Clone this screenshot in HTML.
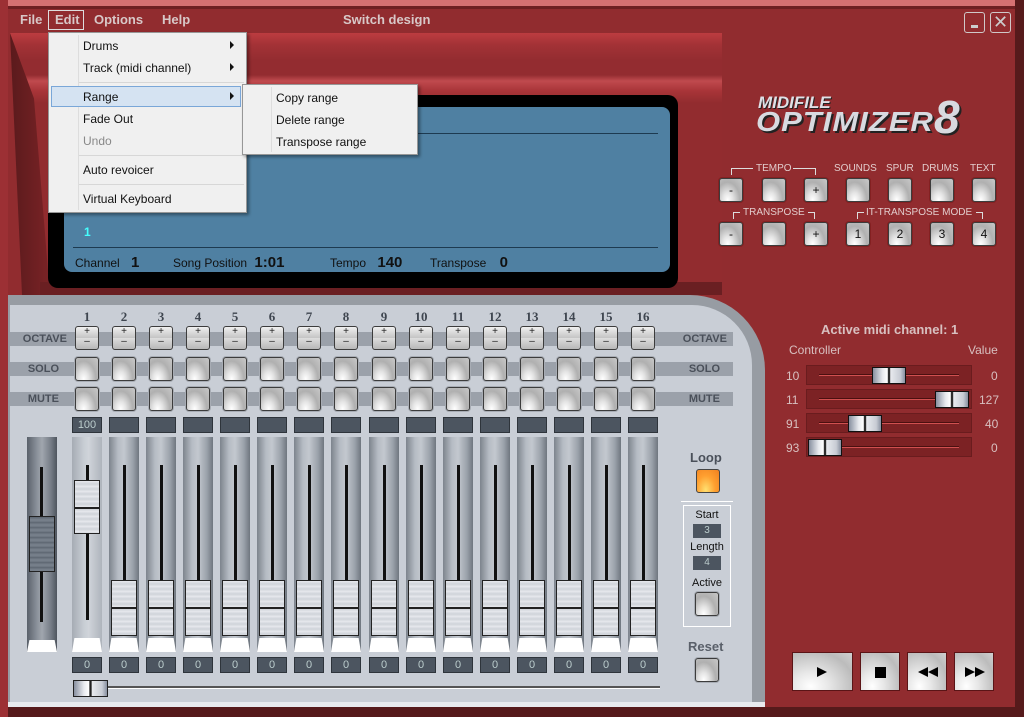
<!DOCTYPE html>
<html><head><meta charset="utf-8"><style>
*{margin:0;padding:0;box-sizing:border-box}
body{width:1024px;height:717px;overflow:hidden;background:#912c2f;position:relative;font-family:"Liberation Sans",sans-serif}
.a{position:absolute}
.menu{color:#d8c8c8;font-weight:bold;font-size:13px;top:12px}
.btn{position:absolute;width:24px;height:24px;border:1px solid #3c3c3c;border-radius:3px;background:radial-gradient(ellipse at 35% 95%,#fff 0,#e4e4e4 25%,#b0b0b0 60%,#c8c8c8 100%);box-shadow:0 0 0 1px rgba(120,20,20,.5);font-size:12px;text-align:center;line-height:22px;color:#111}
.gb{box-shadow:0 0 0 1px #a8adb5}
.band{position:absolute;left:10px;width:723px;height:14px;background:#9ba1aa}
.lbl{position:absolute;font-size:11px;font-weight:bold;color:#4a505a;width:50px;text-align:right}
.col{position:absolute;top:0;width:30px;height:717px}
.col .n{position:absolute;top:309px;width:30px;text-align:center;font:bold 13px "Liberation Serif",serif;color:#3f4650}
.col .o{position:absolute;top:326px;left:3px;width:24px;height:24px;border:1px solid #3c3c3c;border-radius:3px;background:linear-gradient(#f0f0f0,#c4c4c4 50%,#ddd 50%,#b8b8b8);font-size:10px;line-height:10px;text-align:center;color:#222}
.col .s{top:357px;left:3px}
.col .m{top:387px;left:3px}
.col .v{position:absolute;top:417px;width:30px;height:16px;background:#4c5560;border:1px solid #2e343b;color:#bcc;font-size:11px;text-align:center;line-height:14px}
.col .t{position:absolute;top:437px;width:30px;height:215px;background:linear-gradient(90deg,#7d848d,#b6bcc4 30%,#c3c8cf 50%,#9aa1aa 80%,#6f767f);}
.col .t::after{content:"";position:absolute;left:0;right:0;bottom:0;height:14px;background:#fff;clip-path:polygon(8% 0,92% 0,100% 100%,0 100%)}
.col .ln{position:absolute;top:465px;left:14px;width:3px;height:155px;background:#111}
.col .k{position:absolute;top:580px;left:2px;width:26px;height:56px;border:1px solid #222;background:repeating-linear-gradient(#e8eaee 0,#cfd3d9 3px,#e0e3e8 5px)}
.col .k::after{content:"";position:absolute;left:0;right:0;top:26px;height:2px;background:#222}
.col .b{position:absolute;top:657px;width:30px;height:16px;background:#4c5560;border:1px solid #2e343b;color:#bcc;font-size:11px;text-align:center;line-height:14px}
.dd{font-size:12px;color:#111}
.ctrl{position:absolute;left:806px;width:166px;height:20px;background:#7c2224;border:1px solid #6a1c1e}
.ctrl .tr{position:absolute;left:12px;right:12px;top:8px;height:2px;background:#d05050;border-top:1px solid #4a1010}
.ctrl .kn{position:absolute;top:1px;width:34px;height:17px;border:1px solid #111;background:linear-gradient(90deg,#8890a0,#e8eaee 30%,#fff 45%,#222 48%,#222 52%,#e8eaee 55%,#c8ccd4 85%,#8890a0)}
.cl{position:absolute;color:#d8c0c0;font-size:12px}
.hl{position:absolute;color:#e2cccc;font-size:10px}
.tb{position:absolute;top:652px;height:39px;border:1px solid #5a1416;background:radial-gradient(ellipse at 30% 90%,#fff,#e8e8e8 30%,#bcbcbc 75%,#d0d0d0)}
</style></head><body>
<div class="a" style="left:0;top:0;width:1024px;height:6px;background:#d57172"></div>
<div class="a" style="left:0;top:6px;width:1024px;height:3px;background:#6e2022"></div>
<div class="a" style="left:1015px;top:0;width:9px;height:717px;background:#561a1b"></div>
<div class="a" style="left:0;top:707px;width:1024px;height:10px;background:#561a1b"></div>
<div class="a" style="left:0;top:0;width:8px;height:717px;background:#9c3034"></div>

<div class="a menu" style="left:20px">File</div>
<div class="a" style="left:48px;top:10px;width:36px;height:20px;border:1px solid #ddd"></div>
<div class="a menu" style="left:55px">Edit</div>
<div class="a menu" style="left:94px">Options</div>
<div class="a menu" style="left:162px">Help</div>
<div class="a menu" style="left:343px">Switch design</div>
<div class="a" style="left:964px;top:12px;width:21px;height:21px;border:1px solid #d0c8c8;border-radius:3px"><div class="a" style="left:6px;top:12px;width:7px;height:3px;background:#ccc"></div></div>
<div class="a" style="left:990px;top:12px;width:21px;height:21px;border:1px solid #d0c8c8;border-radius:3px;color:#ccc;font-size:18px;line-height:19px;text-align:center">✕</div>

<div class="a" style="left:10px;top:33px;width:712px;height:262px;background:linear-gradient(#bc3c40 0,#a33236 12px,#932c30 28px,#932c30 42px,#c04a4e 48px,#a83438 58px,#922c2f 70px);clip-path:polygon(0 0,100% 0,100% 100%,4% 100%)"></div>
<div class="a" style="left:10px;top:33px;width:40px;height:262px;background:linear-gradient(90deg,#5a1a1c,#7a2326);clip-path:polygon(0 0,60% 25%,100% 100%,30% 100%)"></div>
<div class="a" style="left:40px;top:282px;width:682px;height:13px;background:#6a1f22"></div>
<div class="a" style="left:48px;top:95px;width:630px;height:193px;background:#000;border-radius:10px"></div>
<div class="a" style="left:64px;top:107px;width:606px;height:165px;background:#4f80a2;border-radius:8px"></div>
<div class="a" style="left:73px;top:133px;width:585px;height:1px;background:#1d3a50"></div>
<div class="a" style="left:73px;top:247px;width:585px;height:1px;background:#1d3a50"></div>
<div class="a" style="left:84px;top:225px;color:#4ff;font-size:12px;font-weight:bold">1</div>
<div class="a" style="left:75px;top:254px;font-size:12px;color:#111">Channel <b style="font-size:15px;margin-left:8px">1</b></div>
<div class="a" style="left:173px;top:254px;font-size:12px;color:#111">Song Position <b style="font-size:15px;margin-left:4px">1:01</b></div>
<div class="a" style="left:330px;top:254px;font-size:12px;color:#111">Tempo <b style="font-size:15px;margin-left:8px">140</b></div>
<div class="a" style="left:430px;top:254px;font-size:12px;color:#111">Transpose <b style="font-size:15px;margin-left:10px">0</b></div>

<div class="a" style="left:758px;top:93px;font:italic 900 17px 'Liberation Sans',sans-serif;color:#e0e0e6;text-shadow:1px 1px 0 #222">MIDIFILE</div>
<div class="a" style="left:756px;top:106px;font:italic 900 31px 'Liberation Sans',sans-serif;color:#d8dae0;text-shadow:2px 2px 0 #222;letter-spacing:1px;transform:scaleY(.9);transform-origin:top left">OPTIMIZER</div>
<div class="a" style="left:934px;top:90px;font:italic 900 46px 'Liberation Sans',sans-serif;color:#d8dae0;text-shadow:2px 2px 0 #222">8</div>

<div class="hl" style="left:756px;top:163px">TEMPO</div>
<div class="a" style="left:731px;top:168px;width:22px;height:7px;border-left:1px solid #ddd;border-top:1px solid #ddd"></div>
<div class="a" style="left:793px;top:168px;width:23px;height:7px;border-right:1px solid #ddd;border-top:1px solid #ddd"></div>
<div class="hl" style="left:834px;top:163px">SOUNDS</div>
<div class="hl" style="left:886px;top:163px">SPUR</div>
<div class="hl" style="left:922px;top:163px">DRUMS</div>
<div class="hl" style="left:970px;top:163px">TEXT</div>
<div class="btn" style="left:719px;top:178px">-</div>
<div class="btn" style="left:762px;top:178px"></div>
<div class="btn" style="left:804px;top:178px">+</div>
<div class="btn" style="left:846px;top:178px"></div>
<div class="btn" style="left:888px;top:178px"></div>
<div class="btn" style="left:930px;top:178px"></div>
<div class="btn" style="left:972px;top:178px"></div>
<div class="hl" style="left:743px;top:207px">TRANSPOSE</div>
<div class="a" style="left:733px;top:212px;width:7px;height:7px;border-left:1px solid #ddd;border-top:1px solid #ddd"></div>
<div class="a" style="left:808px;top:212px;width:7px;height:7px;border-right:1px solid #ddd;border-top:1px solid #ddd"></div>
<div class="hl" style="left:866px;top:207px">IT-TRANSPOSE MODE</div>
<div class="a" style="left:857px;top:212px;width:7px;height:7px;border-left:1px solid #ddd;border-top:1px solid #ddd"></div>
<div class="a" style="left:976px;top:212px;width:7px;height:7px;border-right:1px solid #ddd;border-top:1px solid #ddd"></div>
<div class="btn" style="left:719px;top:222px">-</div>
<div class="btn" style="left:762px;top:222px"></div>
<div class="btn" style="left:804px;top:222px">+</div>
<div class="btn" style="left:846px;top:222px">1</div>
<div class="btn" style="left:888px;top:222px">2</div>
<div class="btn" style="left:930px;top:222px">3</div>
<div class="btn" style="left:972px;top:222px">4</div>

<div class="a" style="left:821px;top:322px;font-size:13px;font-weight:bold;color:#d8c0c0">Active midi channel: 1</div>
<div class="cl" style="left:789px;top:343px">Controller</div>
<div class="cl" style="left:968px;top:343px">Value</div>
<div class="ctrl" style="top:365px"><div class="tr"></div><div class="kn" style="left:65px"></div></div>
<div class="ctrl" style="top:389px"><div class="tr"></div><div class="kn" style="left:128px"></div></div>
<div class="ctrl" style="top:413px"><div class="tr"></div><div class="kn" style="left:41px"></div></div>
<div class="ctrl" style="top:437px"><div class="tr"></div><div class="kn" style="left:1px"></div></div>
<div class="cl" style="left:786px;top:369px">10</div><div class="cl" style="left:991px;top:369px">0</div>
<div class="cl" style="left:786px;top:393px">11</div><div class="cl" style="left:979px;top:393px">127</div>
<div class="cl" style="left:786px;top:417px">91</div><div class="cl" style="left:985px;top:417px">40</div>
<div class="cl" style="left:786px;top:441px">93</div><div class="cl" style="left:991px;top:441px">0</div>

<div class="tb" style="left:792px;width:61px"><svg class="a" style="left:23px;top:13px" width="12" height="12"><path d="M1 1L11 6L1 11Z" fill="#000"/></svg></div>
<div class="tb" style="left:860px;width:40px"><div class="a" style="left:14px;top:14px;width:11px;height:11px;background:#000"></div></div>
<div class="tb" style="left:907px;width:40px"><svg class="a" style="left:9px;top:13px" width="22" height="12"><path d="M11 1L1 6L11 11ZM21 1L11 6L21 11Z" fill="#000"/></svg></div>
<div class="tb" style="left:954px;width:40px"><svg class="a" style="left:9px;top:13px" width="22" height="12"><path d="M1 1L11 6L1 11ZM11 1L21 6L11 11Z" fill="#000"/></svg></div>

<div class="a" style="left:8px;top:295px;width:757px;height:412px;background:#979ca3;border-top-right-radius:75px"></div>
<div class="a" style="left:10px;top:305px;width:742px;height:397px;background:#c9ced6;border-top-right-radius:60px"></div>
<div class="a" style="left:8px;top:702px;width:757px;height:5px;background:#e8eaee"></div>
<div class="band" style="top:332px"></div>
<div class="band" style="top:362px"></div>
<div class="band" style="top:392px"></div>
<div class="lbl" style="left:17px;top:333px">OCTAVE</div>
<div class="lbl" style="left:9px;top:363px">SOLO</div>
<div class="lbl" style="left:9px;top:393px">MUTE</div>
<div class="lbl" style="left:677px;top:333px">OCTAVE</div>
<div class="lbl" style="left:670px;top:363px">SOLO</div>
<div class="lbl" style="left:670px;top:393px">MUTE</div>

<div class="a" style="left:27px;top:437px;width:30px;height:215px;background:linear-gradient(90deg,#5a616b,#8d949d 35%,#a0a6ae 50%,#757c86 80%,#4e555e)"></div>
<div class="a" style="left:27px;top:640px;width:30px;height:12px;background:#fff;clip-path:polygon(8% 0,92% 0,100% 100%,0 100%)"></div>
<div class="a" style="left:40px;top:467px;width:3px;height:155px;background:#111"></div>
<div class="a" style="left:29px;top:516px;width:26px;height:56px;border:1px solid #222;background:repeating-linear-gradient(#5c6570 0,#7a838e 3px,#6a737e 5px)"></div>

<div class="col" style="left:72px"><div class="n">1</div><div class="o">+<br>–</div><div class="btn gb s"></div><div class="btn gb m"></div><div class="v">100</div><div class="t" style="background:linear-gradient(90deg,#a6acb4,#c8cdd4 40%,#d0d4da 55%,#aeb4bc)"></div><div class="ln"></div><div class="k" style="top:480px;height:54px"></div><div class="b">0</div></div>
<div class="col" style="left:109px"><div class="n">2</div><div class="o">+<br>–</div><div class="btn gb s"></div><div class="btn gb m"></div><div class="v"></div><div class="t"></div><div class="ln"></div><div class="k"></div><div class="b">0</div></div>
<div class="col" style="left:146px"><div class="n">3</div><div class="o">+<br>–</div><div class="btn gb s"></div><div class="btn gb m"></div><div class="v"></div><div class="t"></div><div class="ln"></div><div class="k"></div><div class="b">0</div></div>
<div class="col" style="left:183px"><div class="n">4</div><div class="o">+<br>–</div><div class="btn gb s"></div><div class="btn gb m"></div><div class="v"></div><div class="t"></div><div class="ln"></div><div class="k"></div><div class="b">0</div></div>
<div class="col" style="left:220px"><div class="n">5</div><div class="o">+<br>–</div><div class="btn gb s"></div><div class="btn gb m"></div><div class="v"></div><div class="t"></div><div class="ln"></div><div class="k"></div><div class="b">0</div></div>
<div class="col" style="left:257px"><div class="n">6</div><div class="o">+<br>–</div><div class="btn gb s"></div><div class="btn gb m"></div><div class="v"></div><div class="t"></div><div class="ln"></div><div class="k"></div><div class="b">0</div></div>
<div class="col" style="left:294px"><div class="n">7</div><div class="o">+<br>–</div><div class="btn gb s"></div><div class="btn gb m"></div><div class="v"></div><div class="t"></div><div class="ln"></div><div class="k"></div><div class="b">0</div></div>
<div class="col" style="left:331px"><div class="n">8</div><div class="o">+<br>–</div><div class="btn gb s"></div><div class="btn gb m"></div><div class="v"></div><div class="t"></div><div class="ln"></div><div class="k"></div><div class="b">0</div></div>
<div class="col" style="left:369px"><div class="n">9</div><div class="o">+<br>–</div><div class="btn gb s"></div><div class="btn gb m"></div><div class="v"></div><div class="t"></div><div class="ln"></div><div class="k"></div><div class="b">0</div></div>
<div class="col" style="left:406px"><div class="n">10</div><div class="o">+<br>–</div><div class="btn gb s"></div><div class="btn gb m"></div><div class="v"></div><div class="t"></div><div class="ln"></div><div class="k"></div><div class="b">0</div></div>
<div class="col" style="left:443px"><div class="n">11</div><div class="o">+<br>–</div><div class="btn gb s"></div><div class="btn gb m"></div><div class="v"></div><div class="t"></div><div class="ln"></div><div class="k"></div><div class="b">0</div></div>
<div class="col" style="left:480px"><div class="n">12</div><div class="o">+<br>–</div><div class="btn gb s"></div><div class="btn gb m"></div><div class="v"></div><div class="t"></div><div class="ln"></div><div class="k"></div><div class="b">0</div></div>
<div class="col" style="left:517px"><div class="n">13</div><div class="o">+<br>–</div><div class="btn gb s"></div><div class="btn gb m"></div><div class="v"></div><div class="t"></div><div class="ln"></div><div class="k"></div><div class="b">0</div></div>
<div class="col" style="left:554px"><div class="n">14</div><div class="o">+<br>–</div><div class="btn gb s"></div><div class="btn gb m"></div><div class="v"></div><div class="t"></div><div class="ln"></div><div class="k"></div><div class="b">0</div></div>
<div class="col" style="left:591px"><div class="n">15</div><div class="o">+<br>–</div><div class="btn gb s"></div><div class="btn gb m"></div><div class="v"></div><div class="t"></div><div class="ln"></div><div class="k"></div><div class="b">0</div></div>
<div class="col" style="left:628px"><div class="n">16</div><div class="o">+<br>–</div><div class="btn gb s"></div><div class="btn gb m"></div><div class="v"></div><div class="t"></div><div class="ln"></div><div class="k"></div><div class="b">0</div></div>

<div class="a" style="left:100px;top:686px;width:560px;height:3px;background:#555;border-bottom:1px solid #fff"></div>
<div class="a" style="left:73px;top:680px;width:35px;height:17px;border:1px solid #222;background:linear-gradient(90deg,#8890a0,#e8eaee 30%,#fff 45%,#222 48%,#222 52%,#e8eaee 55%,#c8ccd4 85%,#8890a0)"></div>

<div class="a" style="left:690px;top:450px;font-size:13px;font-weight:bold;color:#4a505a">Loop</div>
<div class="a" style="left:696px;top:469px;width:24px;height:24px;border:1px solid #444;border-radius:3px;background:radial-gradient(ellipse at 40% 90%,#ffe070,#ffa030 50%,#f08020)"></div>
<div class="a" style="left:681px;top:501px;width:52px;height:1px;background:#fff"></div>
<div class="a" style="left:683px;top:505px;width:48px;height:122px;border:1px solid #fff"></div>
<div class="a" style="left:683px;top:509px;width:48px;text-align:center;font-size:11px;color:#111">Start</div>
<div class="a" style="left:693px;top:524px;width:28px;height:14px;background:#4c5560;color:#bcc;font-size:10px;text-align:center;line-height:14px">3</div>
<div class="a" style="left:683px;top:541px;width:48px;text-align:center;font-size:11px;color:#111">Length</div>
<div class="a" style="left:693px;top:556px;width:28px;height:14px;background:#4c5560;color:#bcc;font-size:10px;text-align:center;line-height:14px">4</div>
<div class="a" style="left:683px;top:577px;width:48px;text-align:center;font-size:11px;color:#111">Active</div>
<div class="btn gb" style="left:695px;top:592px"></div>
<div class="a" style="left:688px;top:639px;font-size:13px;font-weight:bold;color:#5a606a">Reset</div>
<div class="btn gb" style="left:695px;top:658px"></div>

<div class="a" style="left:48px;top:32px;width:199px;height:181px;background:#f0f0f0;border:1px solid #979797;box-shadow:2px 2px 3px rgba(0,0,0,.4)"></div>
<div class="a" style="left:78px;top:35px;width:1px;height:175px;background:#ddd"></div>
<div class="a" style="left:79px;top:82px;width:165px;height:1px;background:#d7d7d7"></div>
<div class="a" style="left:79px;top:155px;width:165px;height:1px;background:#d7d7d7"></div>
<div class="a" style="left:79px;top:184px;width:165px;height:1px;background:#d7d7d7"></div>
<div class="a" style="left:51px;top:86px;width:190px;height:21px;background:#d5e3f2;border:1px solid #7aa7d8"></div>
<div class="a dd" style="left:83px;top:39px">Drums</div>
<div class="a dd" style="left:83px;top:61px">Track (midi channel)</div>
<div class="a dd" style="left:83px;top:90px">Range</div>
<div class="a dd" style="left:83px;top:112px">Fade Out</div>
<div class="a dd" style="left:83px;top:134px;color:#888">Undo</div>
<div class="a dd" style="left:83px;top:163px">Auto revoicer</div>
<div class="a dd" style="left:83px;top:192px">Virtual Keyboard</div>
<svg class="a" style="left:230px;top:41px" width="6" height="60"><path d="M0 0L4 4L0 8ZM0 22L4 26L0 30ZM0 51L4 55L0 59Z" fill="#111"/></svg>
<div class="a" style="left:242px;top:84px;width:176px;height:71px;background:#f0f0f0;border:1px solid #979797;box-shadow:2px 2px 3px rgba(0,0,0,.4)"></div>
<div class="a" style="left:271px;top:87px;width:1px;height:65px;background:#ddd"></div>
<div class="a dd" style="left:276px;top:91px">Copy range</div>
<div class="a dd" style="left:276px;top:113px">Delete range</div>
<div class="a dd" style="left:276px;top:135px">Transpose range</div>
</body></html>
